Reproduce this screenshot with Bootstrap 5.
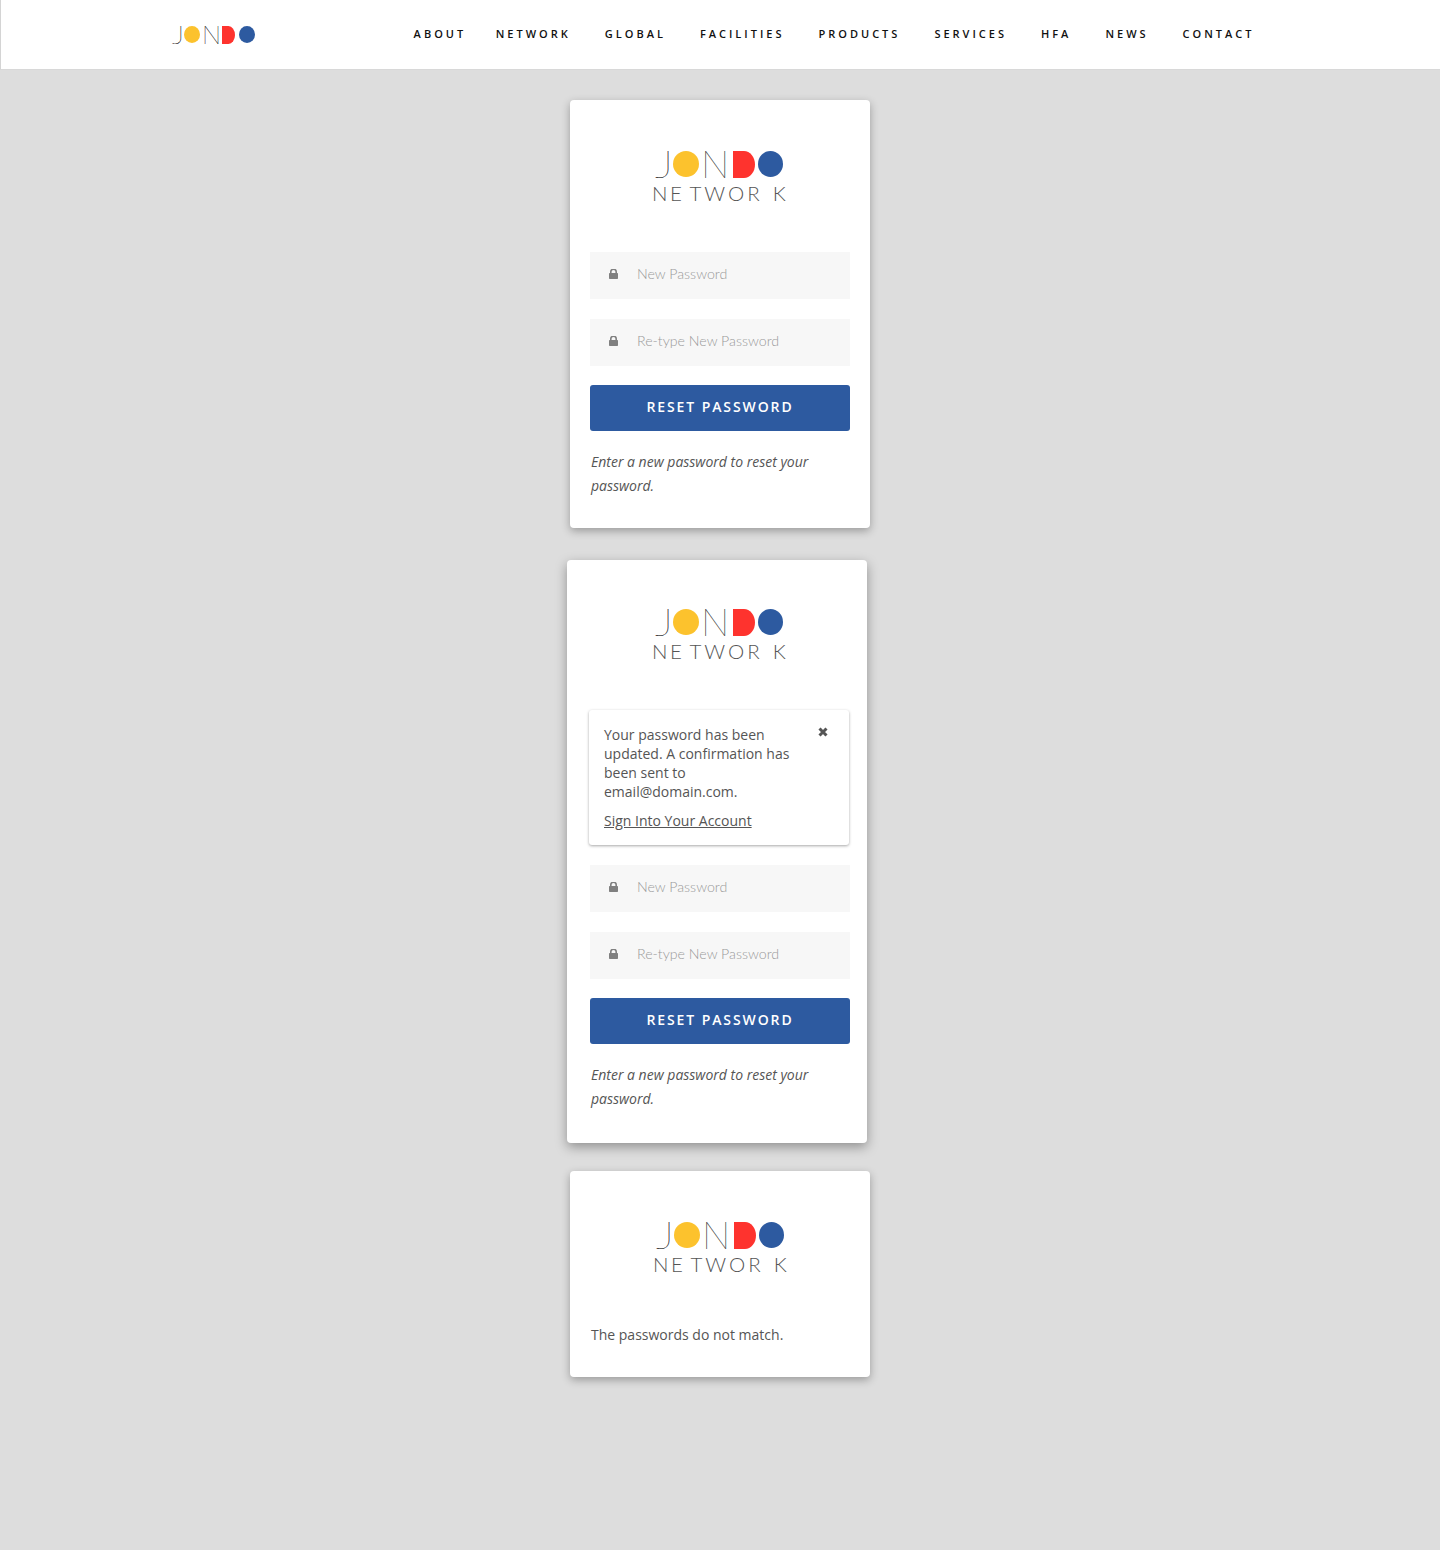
<!DOCTYPE html>
<html lang="en">
<head>
    <meta charset="UTF-8">
    <meta name="viewport" content="width=device-width, initial-scale=1.0">
    <title>Jondo Network - Reset Password</title>
    <link href="https://cdn.jsdelivr.net/npm/bootstrap@5.3.0/dist/css/bootstrap.min.css" rel="stylesheet">
    <style>
        body {
            background: #ddd;
            font-family: "Open Sans", sans-serif;
            color: #555;
            min-height: 1550px;
        }

        .top-bar {
            height: 70px;
            background: #fff;
            border-left: 1px solid #d4d4d4;
            border-bottom: 1px solid #d8d8d8;
            padding: 0 185.5px 0 171px;
        }

        .top-links {
            gap: 34px;
        }

        .top-links a {
            color: #111;
            font-size: 11px;
            font-weight: 600;
            letter-spacing: 3px;
            text-decoration: none;
        }

        .top-links a:first-child {
            margin-right: -4.5px;
        }

        .auth-stack {
            padding-top: 30px;
        }

        .auth-box {
            width: 300px;
            background: #fff;
            border-radius: 4px;
            box-shadow: 0 3px 8px rgba(0, 0, 0, 0.3);
            padding: 20px;
        }

        .auth-box + .auth-box {
            margin-top: 32px;
        }

        .box-alert {
            transform: translateX(-3px);
            padding: 18px 17px 22px 23px;
            box-shadow: 0 4px 12px rgba(0, 0, 0, 0.35);
        }

        .box-alert + .box-last {
            margin-top: 28px;
        }

        .box-last .logo-big {
            margin-bottom: 0;
            transform: translateX(1px);
        }

        .logo-word {
            display: flex;
            align-items: center;
            font-family: "Lato", sans-serif;
            font-weight: 100;
            color: #111;
            -webkit-text-stroke: 0.15px #111;
        }

        .logo-word span {
            display: block;
            flex: none;
        }

        .logo-big {
            width: 130px;
            margin: 30px auto 49px;
        }

        .logo-big .logo-word {
            font-size: 37px;
            height: 28px;
            line-height: 28px;
        }

        .logo-small {
            width: 84px;
        }

        .logo-small .logo-word {
            font-size: 25px;
            height: 19px;
            line-height: 19px;
        }

        .logo-j {
            text-align: right;
        }

        .logo-j b,
        .logo-n b {
            display: inline-block;
            font-weight: 100;
        }

        .logo-j b {
            transform: scaleX(1.2);
            transform-origin: right center;
        }

        .logo-n b {
            transform: scaleX(1.02);
            transform-origin: left center;
        }

        .dot {
            border-radius: 50%;
        }

        .dot-yellow { background: #fcc22d; }
        .dot-red { background: #fe332e; border-radius: 0 50% 50% 0 / 0 50% 50% 0; }
        .dot-blue { background: #2d5aa0; }

        .logo-big .logo-j { width: 18px; }
        .logo-big .dot-yellow { width: 26px; height: 26px; }
        .logo-big .logo-n { width: 27px; margin-left: 2px; }
        .logo-big .dot-red { width: 22px; height: 27px; margin-left: 5px; }
        .logo-big .dot-blue { width: 25px; height: 26px; margin-left: 3px; }

        .logo-small .logo-j { width: 12px; }
        .logo-small .dot-yellow { width: 16px; height: 17px; }
        .logo-small .logo-n { width: 17px; margin-left: 2px; }
        .logo-small .dot-red { width: 13px; height: 18px; margin-left: 3px; }
        .logo-small .dot-blue { width: 16px; height: 17px; margin-left: 4px; }

        .logo-net {
            font-family: "Lato", sans-serif;
            font-weight: 300;
            font-size: 20.5px;
            line-height: 20px;
            letter-spacing: 2.5px;
            color: #555;
            white-space: nowrap;
            margin: 5px 0 0 -3px;
        }

        .net-gap-e { margin-right: 5px; }
        .net-gap-r { margin-right: 10px; letter-spacing: 3px; }

        .pass-field {
            height: 47px;
            background: #f7f7f7;
            padding: 0 0 3px 19px;
            margin-bottom: 20px;
        }

        .pass-field svg {
            flex: none;
            margin-right: 17px;
        }

        .pass-field input {
            border: 0;
            outline: 0;
            background: transparent;
            width: 100%;
            font-family: "Lato", sans-serif;
            font-size: 14.2px;
            font-weight: 300;
        }

        .pass-field input::placeholder {
            color: #999;
            opacity: 1;
        }

        .btn-reset {
            height: 46px;
            margin-top: -1px;
            padding: 0 0 3px;
            background: #2d5aa0;
            border: 0;
            border-radius: 3px;
            color: #fff;
            font-size: 14px;
            font-weight: 600;
            letter-spacing: 1.9px;
        }

        .btn-reset:hover {
            background: #274f8e;
            color: #fff;
        }

        .hint-text {
            margin: 19px 0 0 1px;
            font-size: 14px;
            font-style: italic;
            line-height: 24px;
            padding-bottom: 10px;
        }

        .notice-box {
            position: relative;
            margin: 0 1px 20px -1px;
            padding: 15px 15px 15px;
            background: #fff;
            border-radius: 3px;
            box-shadow: 0 1px 3px rgba(0, 0, 0, 0.35);
            font-size: 14px;
            line-height: 19px;
            color: #555;
        }

        .notice-box p {
            width: 195px;
            margin: 0 0 10px;
        }

        .notice-box a {
            color: #555;
        }

        .notice-close {
            position: absolute;
            top: 17px;
            right: 21px;
            line-height: 0;
        }

        .error-text {
            margin: 49px 0 0 1px;
            font-size: 14px;
            line-height: 24px;
            padding-bottom: 10px;
        }
    </style>
</head>
<body>
<nav class="top-bar d-flex align-items-center justify-content-between">
    <div class="logo-small">
        <div class="logo-word">
            <span class="logo-j"><b>J</b></span><span class="dot dot-yellow"></span><span class="logo-n"><b>N</b></span><span class="dot dot-red"></span><span class="dot dot-blue"></span>
        </div>
    </div>
    <div class="top-links d-flex">
        <a href="#">ABOUT</a>
        <a href="#">NETWORK</a>
        <a href="#">GLOBAL</a>
        <a href="#">FACILITIES</a>
        <a href="#">PRODUCTS</a>
        <a href="#">SERVICES</a>
        <a href="#">HFA</a>
        <a href="#">NEWS</a>
        <a href="#">CONTACT</a>
    </div>
</nav>

<main class="auth-stack d-flex flex-column align-items-center">
    <!-- Reset form -->
    <section class="auth-box">
        <div class="logo-big">
            <div class="logo-word">
                <span class="logo-j"><b>J</b></span><span class="dot dot-yellow"></span><span class="logo-n"><b>N</b></span><span class="dot dot-red"></span><span class="dot dot-blue"></span>
            </div>
            <div class="logo-net"><span class="net-gap-e">NE</span><span class="net-gap-r">TWOR</span>K</div>
        </div>
        <div class="pass-field d-flex align-items-center">
            <svg width="9" height="10" viewBox="0 0 9 11" preserveAspectRatio="none"><path fill="#808080" d="M1 4.500V3a3.500 3.500 0 0 1 7 0v1.500h.3c.4 0 .7.3.7.7v5c0 .4-.3.800-.7.800H.7c-.4 0-.7-.4-.7-.8v-5c0-.4.300-.7.700-.7zM2.600 4.500h3.800V3a1.900 1.900 0 0 0-3.800 0z"/></svg>
            <input type="password" placeholder="New Password">
        </div>
        <div class="pass-field d-flex align-items-center">
            <svg width="9" height="10" viewBox="0 0 9 11" preserveAspectRatio="none"><path fill="#808080" d="M1 4.500V3a3.500 3.500 0 0 1 7 0v1.500h.3c.4 0 .7.3.7.7v5c0 .4-.3.800-.7.800H.7c-.4 0-.7-.4-.7-.8v-5c0-.4.300-.7.700-.7zM2.600 4.500h3.800V3a1.900 1.900 0 0 0-3.800 0z"/></svg>
            <input type="password" placeholder="Re-type New Password">
        </div>
        <button type="button" class="btn btn-reset w-100">RESET PASSWORD</button>
        <p class="hint-text">Enter a new password to reset your password.</p>
    </section>

    <!-- Reset form with success notice -->
    <section class="auth-box box-alert">
        <div class="logo-big">
            <div class="logo-word">
                <span class="logo-j"><b>J</b></span><span class="dot dot-yellow"></span><span class="logo-n"><b>N</b></span><span class="dot dot-red"></span><span class="dot dot-blue"></span>
            </div>
            <div class="logo-net"><span class="net-gap-e">NE</span><span class="net-gap-r">TWOR</span>K</div>
        </div>
        <div class="notice-box">
            <span class="notice-close"><svg width="10" height="10" viewBox="0 0 10 10"><path stroke="#555" stroke-width="3" d="M1.500 1.500l7 7M8.500 1.500l-7 7"/></svg></span>
            <p>Your password has been updated. A confirmation has been sent to email@domain.com.</p>
            <a href="#">Sign Into Your Account</a>
        </div>
        <div class="pass-field d-flex align-items-center">
            <svg width="9" height="10" viewBox="0 0 9 11" preserveAspectRatio="none"><path fill="#808080" d="M1 4.500V3a3.500 3.500 0 0 1 7 0v1.500h.3c.4 0 .7.3.7.7v5c0 .4-.3.800-.7.800H.7c-.4 0-.7-.4-.7-.8v-5c0-.4.300-.7.700-.7zM2.600 4.500h3.800V3a1.900 1.900 0 0 0-3.800 0z"/></svg>
            <input type="password" placeholder="New Password">
        </div>
        <div class="pass-field d-flex align-items-center">
            <svg width="9" height="10" viewBox="0 0 9 11" preserveAspectRatio="none"><path fill="#808080" d="M1 4.500V3a3.500 3.500 0 0 1 7 0v1.500h.3c.4 0 .7.3.7.7v5c0 .4-.3.800-.7.800H.7c-.4 0-.7-.4-.7-.8v-5c0-.4.300-.7.700-.7zM2.600 4.500h3.800V3a1.900 1.900 0 0 0-3.800 0z"/></svg>
            <input type="password" placeholder="Re-type New Password">
        </div>
        <button type="button" class="btn btn-reset w-100">RESET PASSWORD</button>
        <p class="hint-text">Enter a new password to reset your password.</p>
    </section>

    <!-- Error state -->
    <section class="auth-box box-last">
        <div class="logo-big">
            <div class="logo-word">
                <span class="logo-j"><b>J</b></span><span class="dot dot-yellow"></span><span class="logo-n"><b>N</b></span><span class="dot dot-red"></span><span class="dot dot-blue"></span>
            </div>
            <div class="logo-net"><span class="net-gap-e">NE</span><span class="net-gap-r">TWOR</span>K</div>
        </div>
        <p class="error-text">The passwords do not match.</p>
    </section>
</main>
<script src="https://cdn.jsdelivr.net/npm/bootstrap@5.3.0/dist/js/bootstrap.bundle.min.js"></script>
</body>
</html>
